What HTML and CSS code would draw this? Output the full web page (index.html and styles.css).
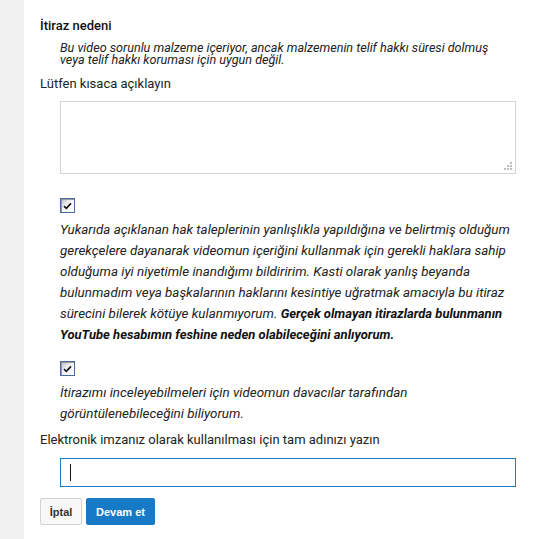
FILE: index.html
```html
<!DOCTYPE html>
<html lang="tr">
<head>
<meta charset="utf-8">
<link rel="stylesheet" href="styles.css">
</head>
<body>
<div class="page">
  <aside class="rail"></aside>
  <main class="form">
    <h3 class="title">İtiraz nedeni</h3>
    <p class="reason">Bu video sorunlu malzeme içeriyor, ancak malzemenin telif hakkı süresi dolmuş veya telif hakkı koruması için uygun değil.</p>
    <label class="lbl">Lütfen kısaca açıklayın</label>
    <div class="box-wrap">
      <textarea class="box"></textarea>
      <span class="grip"><svg viewBox="0 0 8 8" width="8" height="8"><g fill="#bdbdbd"><rect x="6" y="0" width="2" height="2"/><rect x="3" y="3" width="2" height="2"/><rect x="6" y="3" width="2" height="2"/><rect x="0" y="6" width="2" height="2"/><rect x="3" y="6" width="2" height="2"/><rect x="6" y="6" width="2" height="2"/></g></svg></span>
    </div>

    <div class="check-block first">
      <span class="cb"><svg viewBox="0 0 9 8" width="9" height="8"><path d="M1 4.2 L3.3 6.4 L8 1.4" fill="none" stroke="#111" stroke-width="1.6"/></svg></span>
      <p class="stmt">Yukarıda açıklanan hak taleplerinin yanlışlıkla yapıldığına ve belirtmiş olduğum gerekçelere dayanarak videomun içeriğini kullanmak için gerekli haklara sahip olduğuma iyi niyetimle inandığımı bildiririm. Kasti olarak yanlış beyanda bulunmadım veya başkalarının haklarını kesintiye uğratmak amacıyla bu itiraz sürecini bilerek kötüye kulanmıyorum. <b>Gerçek olmayan itirazlarda bulunmanın YouTube hesabımın feshine neden olabileceğini anlıyorum.</b></p>
    </div>

    <div class="check-block second">
      <span class="cb"><svg viewBox="0 0 9 8" width="9" height="8"><path d="M1 4.2 L3.3 6.4 L8 1.4" fill="none" stroke="#111" stroke-width="1.6"/></svg></span>
      <p class="stmt">İtirazımı inceleyebilmeleri için videomun davacılar tarafından görüntülenebileceğini biliyorum.</p>
    </div>

    <label class="lbl sign">Elektronik imzanız olarak kullanılması için tam adınızı yazın</label>
    <div class="name"><span class="caret"></span></div>

    <div class="actions">
      <button class="btn cancel">İptal</button>
      <button class="btn primary">Devam et</button>
    </div>
  </main>
</div>
</body>
</html>
```

FILE: styles.css
```css
* { box-sizing: border-box; }
html, body { margin: 0; padding: 0; background: #fff; }
body { font-family: Roboto, "Noto Sans", Arial, sans-serif; color: #222; font-size: 13px; }
.page { display: flex; min-height: 539px; }
.rail { width: 24px; flex: none; background: #f1f1f1; }
.form { flex: 1; padding: 18px 26px 0 16px; display: flex; flex-direction: column; }
.title { margin: 0; font-size: 13px; line-height: 16px; font-weight: 500; color: #111; }
.reason { margin: 8px 20px 0 20px; font-size: 12.6px; font-style: italic; line-height: 12px; color: #222; }
.lbl { display: block; margin-top: 10px; line-height: 16px; color: #222; }
.box-wrap { position: relative; margin: 9px 0 0 20px; }
.box { display: block; height: 73px; width: 100%; border: 1px solid #d3d3d3; resize: none; font: inherit; outline: none; }
.grip { position: absolute; right: 4px; bottom: 4px; line-height: 0; }
.check-block { margin-left: 20px; }
.check-block.first { margin-top: 24px; }
.check-block.second { margin-top: 16px; }
.cb { display: flex; align-items: center; justify-content: center; width: 15px; height: 15px; border: 1px solid #4a6b9c; background: linear-gradient(135deg, #b8b8b8 0%, #f4f4f4 45%, #fff 100%); box-shadow: inset 1px 1px 0 #9a9a9a; }
.cb svg { display: block; margin-top: 1px; }
.stmt { margin: 6px 0 0 0; font-size: 13.4px; font-style: italic; line-height: 21px; color: #222; }
.stmt b { font-weight: 700; font-size: 13px; color: #111; }
.sign { margin-top: 8px; }
.name { margin: 10px 0 0 20px; height: 29px; border: 1px solid #1c78c8; display: flex; align-items: center; padding-left: 9px; }
.caret { width: 1px; height: 17px; background: #111; }
.actions { display: flex; gap: 4px; margin-top: 11px; }
.btn { height: 27px; border-radius: 2px; font-family: "Liberation Sans", Arial, sans-serif; font-size: 11px; font-weight: 700; padding: 0 10px; cursor: pointer; }
.cancel { width: 42px; padding: 0; background: #f8f8f8; border: 1px solid #d3d3d3; color: #333; }
.primary { width: 69px; padding: 0; background: #167ac6; border: 1px solid #167ac6; color: #fff; }
```
